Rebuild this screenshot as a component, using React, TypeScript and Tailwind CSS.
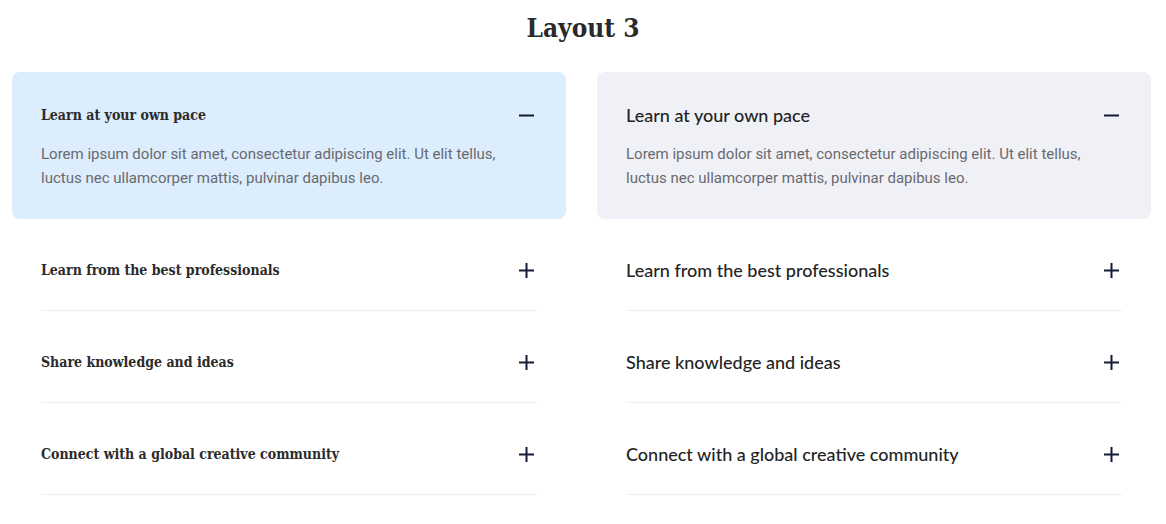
import { useState } from 'react';

const items = [
  {
    title: 'Learn at your own pace',
    body: 'Lorem ipsum dolor sit amet, consectetur adipiscing elit. Ut elit tellus, luctus nec ullamcorper mattis, pulvinar dapibus leo.',
  },
  {
    title: 'Learn from the best professionals',
    body: 'Lorem ipsum dolor sit amet, consectetur adipiscing elit. Ut elit tellus, luctus nec ullamcorper mattis, pulvinar dapibus leo.',
  },
  {
    title: 'Share knowledge and ideas',
    body: 'Lorem ipsum dolor sit amet, consectetur adipiscing elit. Ut elit tellus, luctus nec ullamcorper mattis, pulvinar dapibus leo.',
  },
  {
    title: 'Connect with a global creative community',
    body: 'Lorem ipsum dolor sit amet, consectetur adipiscing elit. Ut elit tellus, luctus nec ullamcorper mattis, pulvinar dapibus leo.',
  },
];

function Icon({ open }: { open: boolean }) {
  return (
    <svg width="15" height="15" viewBox="0 0 15 15" className="mr-[3px] shrink-0 text-[#141a33]">
      <path d="M0 7.5h15" stroke="currentColor" strokeWidth="2" />
      {!open && <path d="M7.5 0v15" stroke="currentColor" strokeWidth="2" />}
    </svg>
  );
}

function Accordion({ variant }: { variant: 'slab' | 'sans' }) {
  const [open, setOpen] = useState(0);
  const activeBg = variant === 'slab' ? 'bg-[#dcedfd]' : 'bg-[#f0f1f7]';
  const titleCls =
    variant === 'slab'
      ? 'text-[14px] font-bold text-[#2b2b2b] [font-family:"DejaVu_Serif_Condensed","DejaVu_Serif",serif]'
      : 'text-[18px] font-medium text-[#232323] [font-family:Lato,sans-serif]';

  return (
    <div className="flex flex-col gap-[8px]">
      {items.map((item, i) => {
        const isOpen = open === i;
        return (
          <div
            key={item.title}
            className={`rounded-lg px-[29px] pt-[30px] ${isOpen ? activeBg : ''}`}
          >
            <div className={isOpen ? 'pb-[29px]' : 'pb-[27px] border-b border-[#eeeeee]'}>
              <button
                className="flex w-full items-center justify-between h-[26px] text-left"
                onClick={() => setOpen(isOpen ? -1 : i)}
              >
                <span className={titleCls}>{item.title}</span>
                <Icon open={isOpen} />
              </button>
              {isOpen && (
                <p className="mt-[14px] text-[15px] leading-[24px] text-[#69696e] [font-family:Roboto,sans-serif]">
                  {item.body}
                </p>
              )}
            </div>
          </div>
        );
      })}
    </div>
  );
}

export default function App() {
  return (
    <div className="min-h-screen bg-white">
      <h1 className="pt-[11px] h-[72px] text-center text-[26px] font-bold leading-[34px] text-[#2a2a2a] [font-family:'DejaVu_Serif_Condensed','DejaVu_Serif',serif]">
        Layout 3
      </h1>
      <div className="grid grid-cols-[554px_554px] gap-x-[31px] pl-[12px]">
        <Accordion variant="slab" />
        <Accordion variant="sans" />
      </div>
    </div>
  );
}
